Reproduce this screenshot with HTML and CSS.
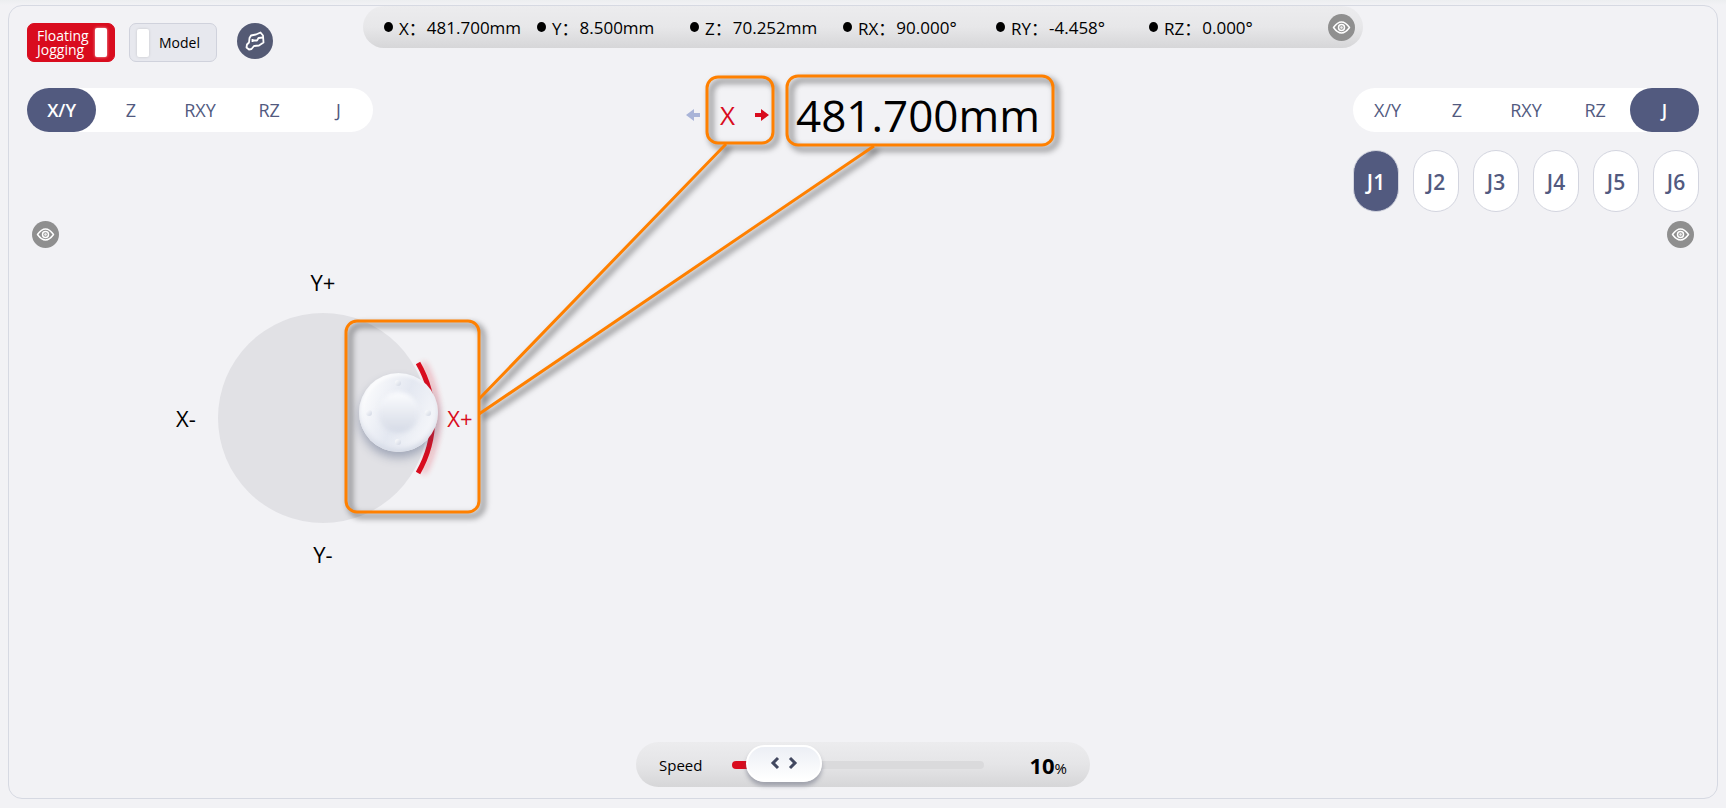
FILE: index.html
```html
<!DOCTYPE html>
<html lang="en">
<head>
  <meta charset="UTF-8">
  <title>Jogging</title>
  <meta name="viewport" content="width=device-width, initial-scale=1.0">
  <link rel="stylesheet" href="styles.css">
</head>
<body>
  <svg class="defs" width="0" height="0" aria-hidden="true">
    <symbol id="eye" viewBox="0 0 27 27">
      <path d="M5.5 13.5Q13.5 2.5 21.5 13.5Q13.5 24.5 5.5 13.5Z"/>
      <circle cx="13.5" cy="13.5" r="3"/>
      <circle cx="13.5" cy="13.5" r=".5"/>
    </symbol>
  </svg>

  <main class="panel">
    <header class="top">
      <div class="toggles">
        <button class="toggle on" type="button" aria-pressed="true"><span>Floating<br>Jogging</span><i></i></button>
        <button class="toggle" type="button" aria-pressed="false"><i></i><span>Model</span></button>
        <button class="robot" type="button" aria-label="Robot">
          <svg viewBox="0 0 36 36" width="36" height="36">
            <path d="M10 21.5L9.5 24.5L12 26.5L14.5 26L17 23L22 22.5L26.5 19.5L26 12.5L23.5 9.5L19 11.5L14 12.5L12.5 15L12 19.5Z"/>
            <path d="M15.5 16V19M15.5 17.5H20L21.5 15L26 14.5"/>
          </svg>
        </button>
      </div>
      <div class="status">
        <ul>
          <li>X：<b>481.700mm</b></li>
          <li>Y：<b>8.500mm</b></li>
          <li>Z：<b>70.252mm</b></li>
          <li>RX：<b>90.000°</b></li>
          <li>RY：<b>-4.458°</b></li>
          <li>RZ：<b>0.000°</b></li>
        </ul>
        <button class="eye" type="button" aria-label="Show position"><svg><use href="#eye"/></svg></button>
      </div>
    </header>

    <div class="work">
      <section class="left">
        <nav class="tabs">
          <button class="active" type="button">X/Y</button>
          <button type="button">Z</button>
          <button type="button">RXY</button>
          <button type="button">RZ</button>
          <button type="button">J</button>
        </nav>
        <button class="eye" type="button" aria-label="Show left joystick"><svg><use href="#eye"/></svg></button>
        <div class="joystick">
          <span class="y-plus">Y+</span>
          <span class="x-minus">X-</span>
          <div class="pad">
            <svg class="arc" viewBox="-105 -105 210 210" width="210" height="210">
              <defs>
                <filter id="soft" x="-100%" y="-20%" width="300%" height="140%"><feGaussianBlur stdDeviation="3"/></filter>
              </defs>
              <path class="glow" d="M100 -55A115 115 0 0 1 100 55" filter="url(#soft)"/>
              <path d="M95 -55A110 110 0 0 1 95 55"/>
            </svg>
            <div class="knob"><i></i><i></i><i></i><i></i></div>
          </div>
          <span class="x-plus">X+</span>
          <span class="y-minus">Y-</span>
        </div>
      </section>

      <div class="readout">
        <svg class="back" viewBox="0 0 14 12" width="14" height="12"><path d="M0 6L8 0V4H14V8H8V12Z"/></svg>
        <span class="axis">X</span>
        <svg class="forward" viewBox="0 0 14 12" width="14" height="12"><path d="M14 6L6 0V4H0V8H6V12Z"/></svg>
        <output>481.700mm</output>
      </div>

      <section class="right">
        <nav class="tabs">
          <button type="button">X/Y</button>
          <button type="button">Z</button>
          <button type="button">RXY</button>
          <button type="button">RZ</button>
          <button class="active" type="button">J</button>
        </nav>
        <div class="joints">
          <button class="active" type="button">J1</button>
          <button type="button">J2</button>
          <button type="button">J3</button>
          <button type="button">J4</button>
          <button type="button">J5</button>
          <button type="button">J6</button>
        </div>
        <button class="eye" type="button" aria-label="Show right joystick"><svg><use href="#eye"/></svg></button>
      </section>
    </div>

    <footer class="speed">
      <label for="speed">Speed</label>
      <input type="range" id="speed" min="2" max="100" value="10">
      <output for="speed"><b id="speedValue">10</b>%</output>
    </footer>

    <!-- callouts over the joystick and the readout -->
    <svg class="callouts" viewBox="0 0 1710 794" width="1710" height="794" aria-hidden="true">
      <rect x="698" y="71" width="66" height="66" rx="11"/>
      <rect x="778" y="70" width="266" height="69" rx="11"/>
      <rect x="337" y="315" width="133" height="191" rx="11"/>
      <path d="M717 138L470 393M865 140L470 408"/>
    </svg>
  </main>

  <script>
    const speed = document.getElementById('speed');
    const speedValue = document.getElementById('speedValue');

    speed.addEventListener('input', function() {
      speedValue.textContent = speed.value;
      speed.style.setProperty('--fill', speed.value + '%');
    });
  </script>
</body>
</html>
```
FILE: styles.css
```css
* {
  box-sizing: border-box;
}
body {
  margin: 0;
  padding: 5px 8px 9px;
  min-height: 100vh;
  display: flex;
  background: linear-gradient(#eceef0, #f2f2f5 5px);
  font-family: "Open Sans", "Noto Sans", "Noto Sans CJK SC", sans-serif;
  color: #000;
}
button {
  padding: 0;
  border: none;
  font: inherit;
  cursor: pointer;
}
.defs {
  position: absolute;
}
.panel {
  position: relative;
  flex: 1;
  display: flex;
  flex-direction: column;
  padding: 0 18px 11px;
  border: 1px solid #d6d9e2;
  border-radius: 14px;
  background: #f2f2f5;
}

/* top row */
.top {
  display: grid;
  grid-template-columns: 1fr 1000px 1fr;
}
.toggles {
  display: flex;
  gap: 14px;
  padding-top: 17px;
}
.toggle {
  display: flex;
  align-items: center;
  gap: 10px;
  width: 88px;
  height: 39px;
  padding: 0 7px;
  border: 1px solid #d0d2dc;
  border-radius: 7px;
  background: #e7e8ee;
  font-size: 14px;
  line-height: 14px;
}
.toggle i {
  width: 12px;
  height: 28px;
  border-radius: 2px;
  background: #fff;
  box-shadow: 0 0 3px rgba(0, 0, 0, 0.15);
}
.toggle.on {
  gap: 6px;
  padding-left: 9px;
  border-color: #d90c1e;
  background: #d90c1e;
  color: #fff;
  text-align: left;
}
.toggle.on i {
  width: 13px;
  height: 29px;
  box-shadow: 0 0 3px rgba(255, 255, 255, 0.7);
}
.robot {
  width: 36px;
  height: 36px;
  margin-left: 6px;
  border-radius: 50%;
  background: #545a74;
}
.robot svg {
  display: block;
  fill: none;
  stroke: #fff;
  stroke-width: 1.8;
  stroke-linejoin: round;
}
.status {
  display: flex;
  align-items: center;
  justify-content: space-between;
  height: 42px;
  padding: 0 8px 0 21px;
  border-radius: 21px;
  background: linear-gradient(#ececee, #e7e7e9 50%, #d6d6d8);
}
.status ul {
  display: flex;
  margin: 0;
  padding: 0;
  list-style: none;
}
.status li {
  display: flex;
  align-items: center;
  width: 153px;
  font-size: 17px;
  font-weight: 380;
  white-space: nowrap;
}
.status li::before {
  content: "";
  width: 9px;
  height: 10px;
  margin-right: 6px;
  border-radius: 50%;
  background: #000;
}
.status b {
  margin-left: 1px;
  font-weight: inherit;
}
.eye {
  display: block;
  width: 27px;
  height: 27px;
  border-radius: 50%;
  background: #8f8f8f;
}
.eye svg {
  display: block;
  width: 27px;
  height: 27px;
  fill: none;
  stroke: #fff;
  stroke-width: 1.5;
  stroke-linejoin: round;
}

/* work area */
.work {
  display: grid;
  grid-template-columns: 1fr auto 1fr;
  padding-top: 26px;
}
.tabs {
  display: flex;
  width: 346px;
  height: 44px;
  border-radius: 22px;
  background: #fff;
}
.tabs button {
  flex: 1;
  border-radius: 22px;
  background: none;
  color: #525a7f;
  font-size: 18px;
  font-weight: 500;
}
.tabs .active,
.joints .active {
  background: #525a7f;
  color: #fff;
  font-weight: 600;
}
.left .eye {
  margin: 89px 0 0 5px;
}
.right {
  display: flex;
  flex-direction: column;
  align-items: flex-end;
}
.right .eye {
  margin: 9px 5px 0 0;
}
.joints {
  display: flex;
  gap: 14px;
  padding-top: 18px;
}
.joints button {
  width: 46px;
  height: 62px;
  padding-top: 1px;
  border: 1px solid #d3d5df;
  border-radius: 23px;
  background: #fff;
  color: #525a7f;
  font-size: 21px;
  font-weight: 550;
}
.readout {
  display: flex;
  align-items: center;
  align-self: start;
  height: 54px;
}
.readout .axis {
  margin: 0 20px;
  font-size: 26px;
  color: #d90c1e;
}
.readout output {
  margin-left: 27px;
  font-size: 44px;
  line-height: 52px;
}
.back {
  fill: #a9b4d8;
}
.forward {
  fill: #d90c1e;
}

/* joystick */
.joystick {
  display: grid;
  grid-template-columns: 26px 210px 26px;
  grid-template-rows: 30px 210px 30px;
  gap: 16px 19px;
  place-items: center;
  width: 300px;
  margin: 19px 0 0 146px;
  font-size: 22px;
  line-height: 30px;
}
.y-plus,
.y-minus {
  grid-column: 1 / -1;
}
.x-plus {
  color: #d90c1e;
}
.pad {
  position: relative;
  width: 210px;
  height: 210px;
  border-radius: 50%;
  background: #e1e1e5;
}
.arc {
  display: block;
  overflow: visible;
  fill: none;
  stroke: #d90c1e;
  stroke-width: 5;
}
.glow {
  stroke-width: 5;
  opacity: 0.3;
}
.knob {
  position: absolute;
  left: 141px;
  top: 60px;
  width: 79px;
  height: 79px;
  border-radius: 50%;
  background:
    radial-gradient(circle, #f0f1f6 0, #f0f1f6 24%, transparent 32%),
    linear-gradient(115deg, #fff 5%, #e4e8f1 50%, #f7f8fb 90%);
  box-shadow: 0 6px 10px rgba(70, 85, 120, 0.4), inset 0 -3px 5px #d5dae6, inset 2px 2px 4px #fff;
}
.knob::before {
  content: "";
  position: absolute;
  inset: 19px;
  border-radius: 50%;
  background: linear-gradient(#fbfcfe, #d5dae6);
  filter: blur(2px);
}
.knob i {
  position: absolute;
  width: 6px;
  height: 6px;
  border-radius: 50%;
  background: linear-gradient(135deg, #fff, #cfd5e2);
}
.knob i:nth-child(1) {
  left: 36px;
  top: 7px;
}
.knob i:nth-child(2) {
  left: 66px;
  top: 37px;
}
.knob i:nth-child(3) {
  left: 36px;
  top: 66px;
}
.knob i:nth-child(4) {
  left: 7px;
  top: 37px;
}

/* speed bar */
.speed {
  display: flex;
  align-items: center;
  width: 454px;
  height: 45px;
  margin: auto auto 0;
  padding: 0 23px;
  border-radius: 23px;
  background: linear-gradient(#ececee, #e5e5e7 50%, #d6d6d8);
  font-size: 15px;
}
.speed label {
  width: 73px;
  font-weight: 380;
}
.speed input {
  --fill: 10%;
  appearance: none;
  width: 252px;
  height: 37px;
  margin: 0;
  background: none;
}
.speed input::-webkit-slider-runnable-track {
  height: 8px;
  border-radius: 4px;
  background: linear-gradient(90deg, #d90c1e var(--fill), #dadadc var(--fill));
}
.speed input::-webkit-slider-thumb {
  appearance: none;
  width: 76px;
  height: 37px;
  margin-top: -16px;
  border: 2px solid #fff;
  border-radius: 19px;
  background:
    url("data:image/svg+xml,%3Csvg xmlns='http://www.w3.org/2000/svg' width='28' height='14' fill='none' stroke='%23424860' stroke-width='3'%3E%3Cpath d='M8 2L3 7L8 12M20 2L25 7L20 12'/%3E%3C/svg%3E") center no-repeat,
    linear-gradient(#eceff5, #fff);
  box-shadow: 0 4px 4px rgba(90, 95, 115, 0.45);
}
.speed output {
  margin-left: auto;
}
.speed output b {
  font-size: 22px;
}

/* callouts */
.callouts {
  position: absolute;
  left: 0;
  top: 0;
  fill: none;
  stroke: #ff8000;
  stroke-width: 3;
  filter: drop-shadow(4px 4px 3px rgba(0, 0, 0, 0.65));
  pointer-events: none;
}
```
